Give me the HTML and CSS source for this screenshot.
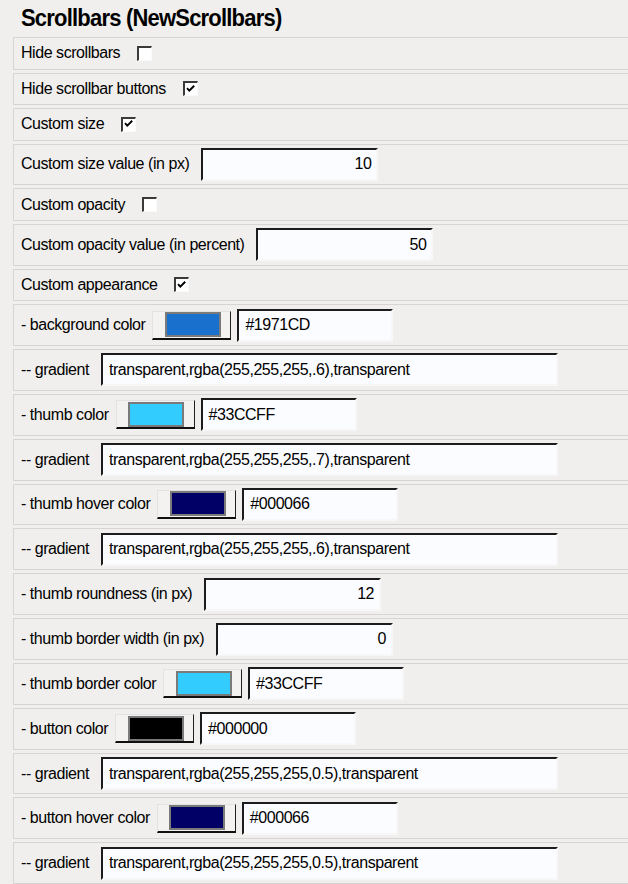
FILE: index.html
```html
<!DOCTYPE html>
<html lang="en">
<head>
<meta charset="utf-8">
<title>Scrollbars (NewScrollbars)</title>
<link rel="stylesheet" href="styles.css">
</head>
<body>
<div class="panel">
  <h1 class="title"><span class="tall-text">Scrollbars (NewScrollbars)</span></h1>

  <div class="row"><span class="label">Hide scrollbars</span><span class="cb"></span></div>
  <div class="row"><span class="label">Hide scrollbar buttons</span><span class="cb"><svg viewBox="0 0 9 7" width="9" height="7"><polyline points="1,3.2 3.3,5.6 8.2,0.8"/></svg></span></div>
  <div class="row"><span class="label">Custom size</span><span class="cb"><svg viewBox="0 0 9 7" width="9" height="7"><polyline points="1,3.2 3.3,5.6 8.2,0.8"/></svg></span></div>
  <div class="row tall"><span class="label">Custom size value (in px)</span><span class="field num"><span class="val">10</span></span></div>
  <div class="row"><span class="label">Custom opacity</span><span class="cb"></span></div>
  <div class="row tall"><span class="label">Custom opacity value (in percent)</span><span class="field num"><span class="val">50</span></span></div>
  <div class="row"><span class="label">Custom appearance</span><span class="cb"><svg viewBox="0 0 9 7" width="9" height="7"><polyline points="1,3.2 3.3,5.6 8.2,0.8"/></svg></span></div>

  <div class="row tall"><span class="label">- background color</span><span class="colorbtn"><span class="swatch sw-1971cd"></span></span><span class="field hex"><span class="val">#1971CD</span></span></div>
  <div class="row tall"><span class="label">-- gradient</span><span class="field grad"><span class="val">transparent,rgba(255,255,255,.6),transparent</span></span></div>
  <div class="row tall"><span class="label">- thumb color</span><span class="colorbtn"><span class="swatch sw-33ccff"></span></span><span class="field hex"><span class="val">#33CCFF</span></span></div>
  <div class="row tall"><span class="label">-- gradient</span><span class="field grad"><span class="val">transparent,rgba(255,255,255,.7),transparent</span></span></div>
  <div class="row tall"><span class="label">- thumb hover color</span><span class="colorbtn"><span class="swatch sw-000066"></span></span><span class="field hex"><span class="val">#000066</span></span></div>
  <div class="row tall"><span class="label">-- gradient</span><span class="field grad"><span class="val">transparent,rgba(255,255,255,.6),transparent</span></span></div>
  <div class="row tall"><span class="label">- thumb roundness (in px)</span><span class="field num"><span class="val">12</span></span></div>
  <div class="row tall"><span class="label">- thumb border width (in px)</span><span class="field num"><span class="val">0</span></span></div>
  <div class="row tall"><span class="label">- thumb border color</span><span class="colorbtn"><span class="swatch sw-33ccff"></span></span><span class="field hex"><span class="val">#33CCFF</span></span></div>
  <div class="row tall"><span class="label">- button color</span><span class="colorbtn"><span class="swatch sw-000000"></span></span><span class="field hex"><span class="val">#000000</span></span></div>
  <div class="row tall"><span class="label">-- gradient</span><span class="field grad"><span class="val">transparent,rgba(255,255,255,0.5),transparent</span></span></div>
  <div class="row tall"><span class="label">- button hover color</span><span class="colorbtn"><span class="swatch sw-000066"></span></span><span class="field hex"><span class="val">#000066</span></span></div>
  <div class="row tall"><span class="label">-- gradient</span><span class="field grad"><span class="val">transparent,rgba(255,255,255,0.5),transparent</span></span></div>
</div>
</body>
</html>
```

FILE: styles.css
```css
html, body {
  margin: 0;
  padding: 0;
  overflow: hidden;
  background: #f0efed;
}

body {
  font-family: "Liberation Sans", Arial, sans-serif;
  font-size: 16px;
  letter-spacing: -0.45px;
  color: #000;
}

.panel {
  padding: 3px 0 0 13px;
  margin-right: -40px;
}

.title {
  margin: 0 0 4px 0;
  padding-left: 8px;
  font-size: 22px;
  letter-spacing: -0.8px;
  font-weight: bold;
  line-height: 30px;
}

.tall-text {
  display: inline-block;
  transform: scaleY(1.08);
}

.row {
  display: flex;
  align-items: center;
  min-height: 30.5px;
  padding: 0 7px;
  margin-bottom: 3px;
  border: 1px solid #d7d5d3;
  background: #f0efed;
  box-sizing: content-box;
}

.row.tall {
  min-height: 39.85px;
}

.label {
  display: inline-block;
  white-space: nowrap;
  line-height: 20px;
  transform: scaleY(1.08);
}

.cb {
  display: inline-flex;
  align-items: center;
  justify-content: center;
  width: 12px;
  height: 12px;
  margin-left: 17px;
  background: #fff;
  border-top: 2px solid #3a3a3a;
  border-left: 2px solid #3a3a3a;
  border-right: 1px solid #fafafa;
  border-bottom: 1px solid #fafafa;
  box-sizing: content-box;
}

.cb svg {
  display: block;
  margin: 0 1px 2px 0;
}

.cb polyline {
  fill: none;
  stroke: #000;
  stroke-width: 1.9;
}

.field {
  display: flex;
  align-items: center;
  height: 33px;
  box-sizing: border-box;
  background: #fbfcff;
  border-top: 2px solid #1c1c1c;
  border-left: 2px solid #1c1c1c;
  border-right: 2px solid #f7f7f7;
  border-bottom: 2px solid #f7f7f7;
  white-space: nowrap;
  line-height: 20px;
}

.val {
  display: inline-block;
  transform: scaleY(1.08);
}

.num {
  width: 177px;
  margin-left: 12px;
  justify-content: flex-end;
  padding-right: 5px;
}

.hex {
  width: 156px;
  margin-left: 6px;
  padding-left: 6px;
}

.grad {
  width: 457px;
  margin-left: 12px;
  padding-left: 6px;
}

.colorbtn {
  display: flex;
  align-items: center;
  justify-content: center;
  width: 79px;
  height: 29px;
  margin-left: 7px;
  box-sizing: border-box;
  background: #f3f2f1;
  border-top: 1px solid #e2e2e2;
  border-left: 1px solid #e2e2e2;
  border-right: 1px solid #202020;
  border-bottom: 2px solid #101010;
  padding-left: 2px;
}

.swatch {
  display: block;
  width: 56px;
  height: 25px;
  box-sizing: border-box;
  border: 2px solid #7a7a7a;
}

.sw-1971cd { background: #1971cd; }
.sw-33ccff { background: #33ccff; }
.sw-000066 { background: #000066; }
.sw-000000 { background: #000000; }
```
